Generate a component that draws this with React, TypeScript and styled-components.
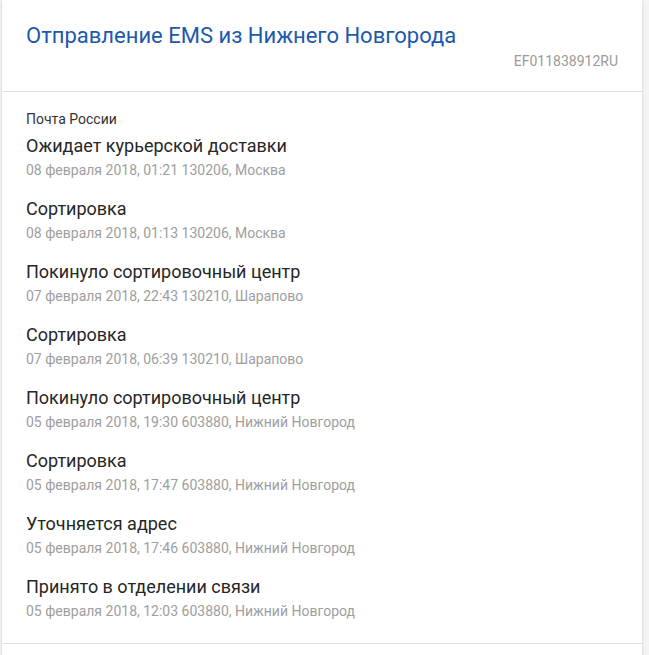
import React from "react";
import styled, { createGlobalStyle } from "styled-components";

const Global = createGlobalStyle`
  html, body { margin: 0; padding: 0; background: #f4f4f4; }
  body { font-family: Roboto, "Noto Sans", sans-serif; }
`;

const Card = styled.div`
  margin-left: 2px;
  width: 640px;
  background: #fff;
  box-shadow: 0 1px 3px rgba(0, 0, 0, 0.18);
`;

const Header = styled.div`
  padding: 24px 24px 20px 24px;
  border-bottom: 1px solid #e0e0e0;
  display: flex;
  flex-direction: column;
`;

const Title = styled.h1`
  margin: 0;
  font-size: 22px;
  line-height: 24px;
  font-weight: 400;
  color: #1c59ad;
`;

const Tracking = styled.div`
  margin-top: 3px;
  align-self: flex-end;
  font-size: 14px;
  line-height: 20px;
  color: #9a9a9a;
`;

const Body = styled.div`
  padding: 19px 24px 22px 24px;
  border-bottom: 1px solid #e0e0e0;
`;

const Source = styled.div`
  font-size: 14px;
  line-height: 16px;
  color: #333;
  margin-bottom: 7px;
`;

const Events = styled.div`
  display: flex;
  flex-direction: column;
  gap: 17px;
`;

const Event = styled.div`
  display: flex;
  flex-direction: column;
`;

const EventTitle = styled.div`
  font-size: 18px;
  line-height: 24px;
  color: #262626;
  margin-bottom: 2px;
`;

const EventMeta = styled.div`
  font-size: 14px;
  line-height: 20px;
  color: #9e9e9e;
`;

const Footer = styled.div`
  height: 40px;
`;

const events = [
  ["Ожидает курьерской доставки", "08 февраля 2018, 01:21 130206, Москва"],
  ["Сортировка", "08 февраля 2018, 01:13 130206, Москва"],
  ["Покинуло сортировочный центр", "07 февраля 2018, 22:43 130210, Шарапово"],
  ["Сортировка", "07 февраля 2018, 06:39 130210, Шарапово"],
  ["Покинуло сортировочный центр", "05 февраля 2018, 19:30 603880, Нижний Новгород"],
  ["Сортировка", "05 февраля 2018, 17:47 603880, Нижний Новгород"],
  ["Уточняется адрес", "05 февраля 2018, 17:46 603880, Нижний Новгород"],
  ["Принято в отделении связи", "05 февраля 2018, 12:03 603880, Нижний Новгород"],
];

export default function App() {
  return (
    <>
      <Global />
      <Card>
        <Header>
          <Title>Отправление EMS из Нижнего Новгорода</Title>
          <Tracking>EF011838912RU</Tracking>
        </Header>
        <Body>
          <Source>Почта России</Source>
          <Events>
            {events.map(([t, m], i) => (
              <Event key={i}>
                <EventTitle>{t}</EventTitle>
                <EventMeta>{m}</EventMeta>
              </Event>
            ))}
          </Events>
        </Body>
        <Footer />
      </Card>
    </>
  );
}
